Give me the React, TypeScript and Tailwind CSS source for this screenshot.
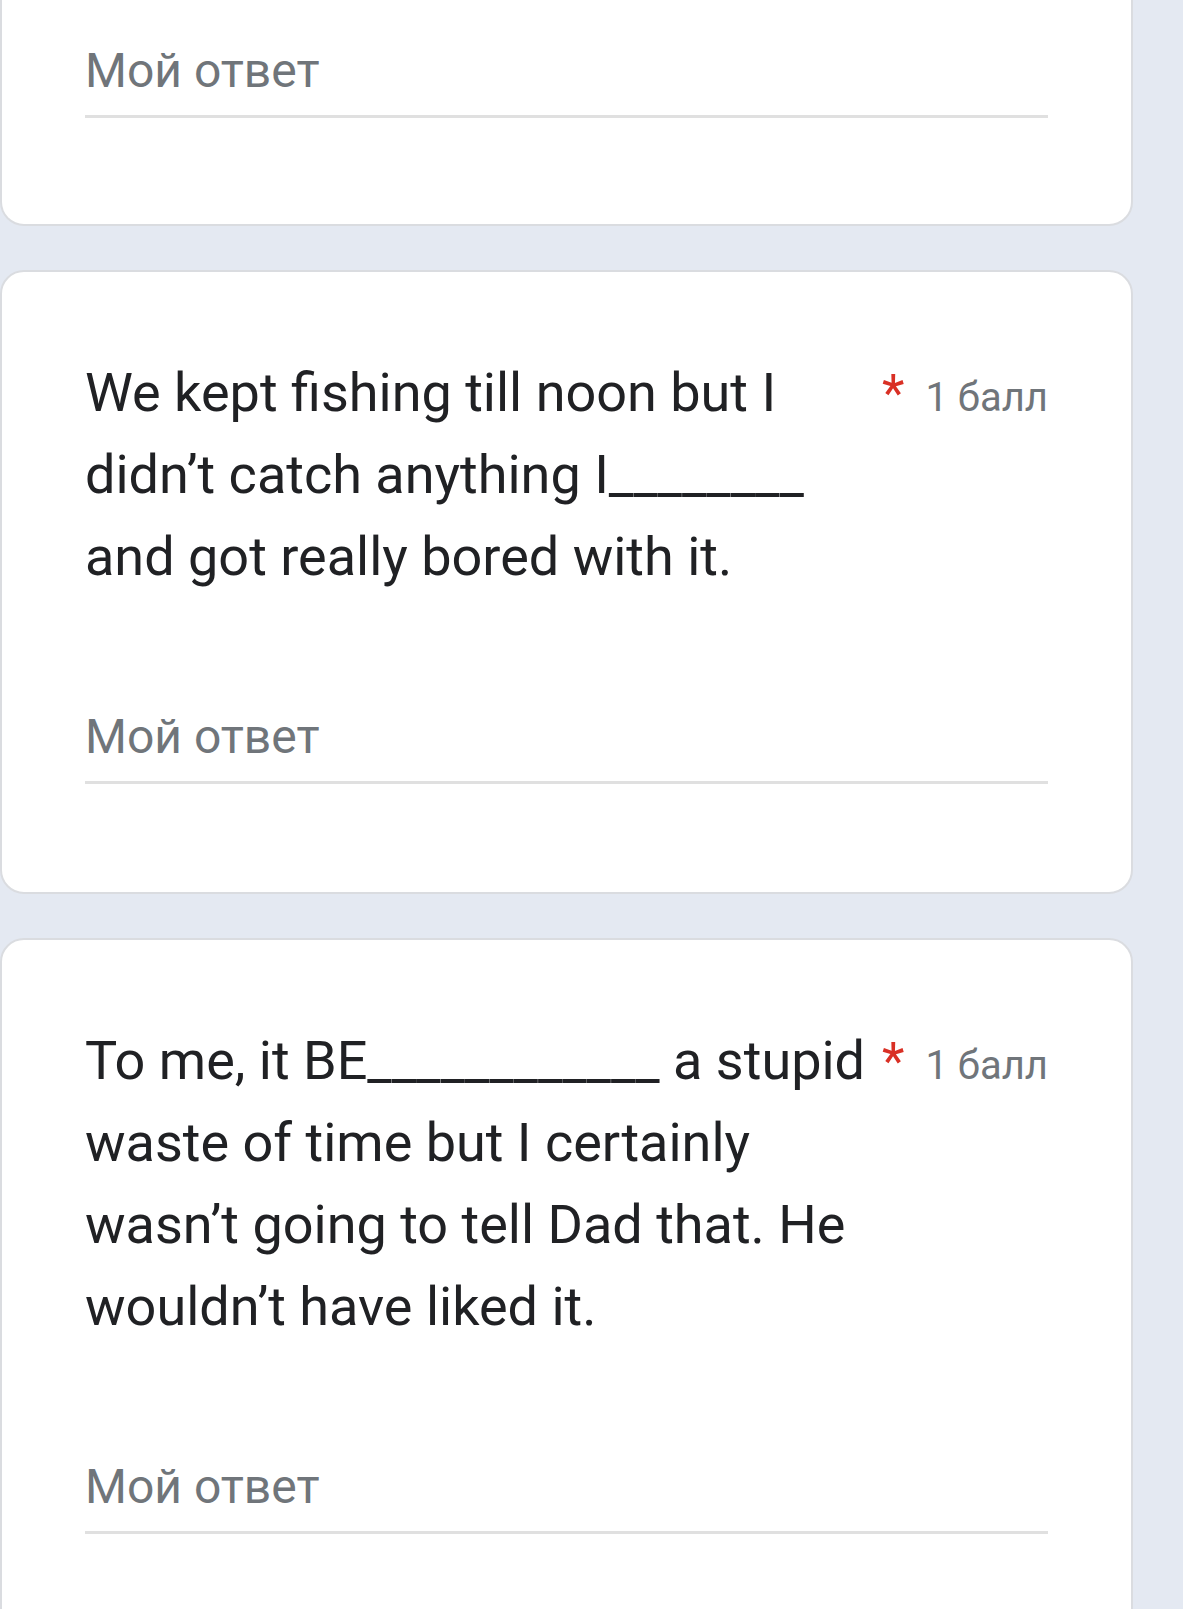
import React from "react";

const font = { fontFamily: "Roboto, 'Noto Sans', sans-serif" };

function AnswerField() {
  return (
    <div>
      <div className="text-[48px] leading-[58px] text-[#70757a]">Мой ответ</div>
      <div className="mt-[15px] h-[3px] bg-[#e0e0e0]" />
    </div>
  );
}

function Question({ title }: { title: string }) {
  return (
    <div className="w-[1133px] rounded-[24px] border-2 border-[#dadce0] bg-white px-[83px] pt-[80px] pb-[108px]">
      <div className="flex items-baseline">
        <div className="flex-1 text-[54px] leading-[82px] text-[#202124]">{title}</div>
        <div className="ml-[14px] flex shrink-0 items-baseline">
          <span className="text-[52px] leading-none text-[#d93025]">*</span>
          <span className="ml-[21px] text-[40px] leading-none text-[#70757a]">1 балл</span>
        </div>
      </div>
      <div className="mt-[110px]">
        <AnswerField />
      </div>
    </div>
  );
}

export default function App() {
  return (
    <div className="h-[1609px] w-full overflow-hidden bg-[#e4e9f2]" style={font}>
      <div className="flex flex-col gap-[44px]">
        <div className="w-[1133px] rounded-b-[24px] border-x-2 border-b-2 border-[#dadce0] bg-white px-[83px] pt-[42px] pb-[106px]">
          <AnswerField />
        </div>
        <Question title="We kept fishing till noon but I didn’t catch anything I________ and got really bored with it." />
        <Question title="To me, it BE____________ a stupid waste of time but I certainly wasn’t going to tell Dad that. He wouldn’t have liked it." />
      </div>
    </div>
  );
}
